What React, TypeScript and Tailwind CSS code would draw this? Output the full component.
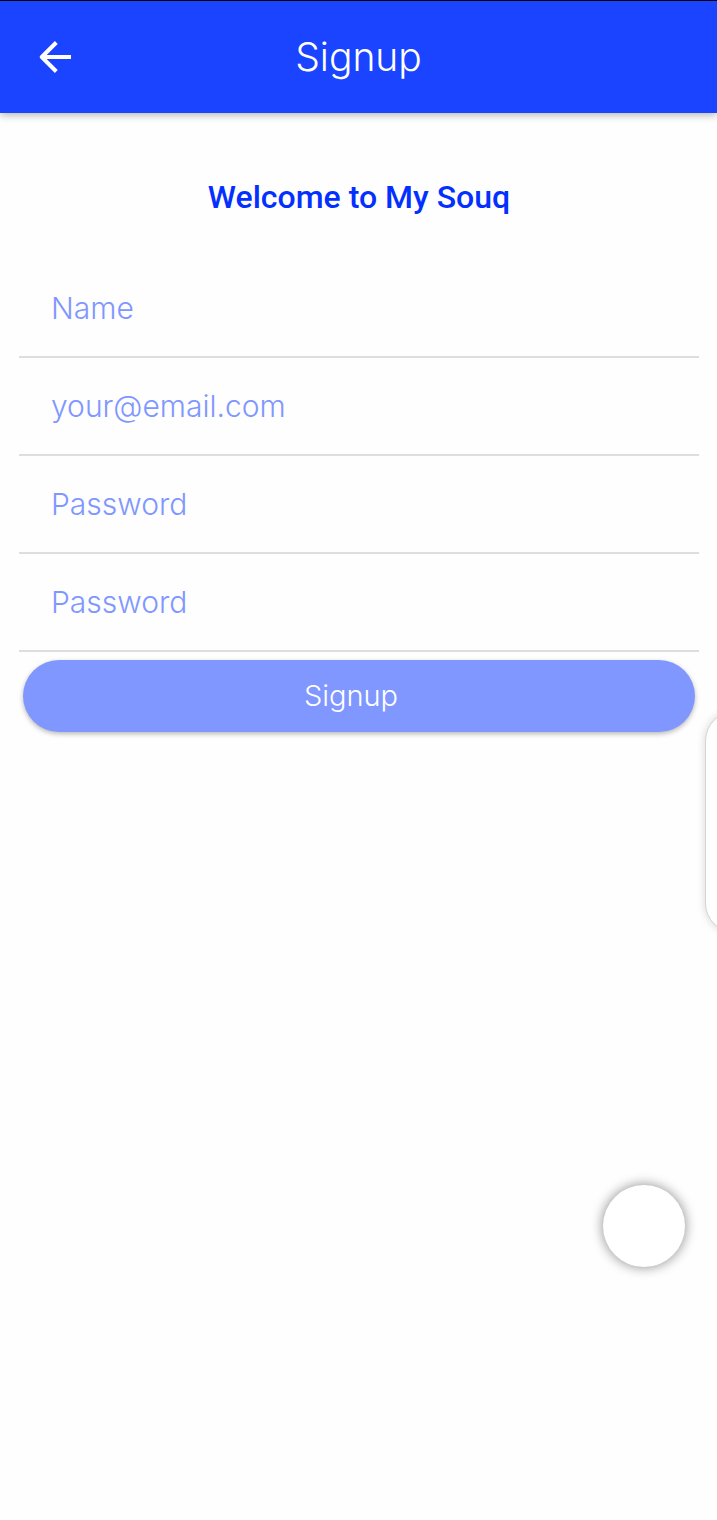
const fields = [
  { id: "name", label: "Name", placeholder: "Name", type: "text" },
  { id: "email", label: "Email", placeholder: "your@email.com", type: "email" },
  { id: "password", label: "Password", placeholder: "Password", type: "password" },
  { id: "confirm", label: "Confirm password", placeholder: "Password", type: "password" },
];

export default function App() {
  return (
    <div className="relative flex min-h-screen flex-col overflow-hidden bg-[#fefefe] font-['Inter',sans-serif] font-light">
      <header className="grid h-[113px] grid-cols-[64px_1fr_64px] items-center border-t border-black bg-[#1a44ff] px-[23px] text-white shadow-[0_2px_8px_rgba(0,0,0,0.3)]">
        <button type="button" aria-label="Back" className="flex size-16 items-center justify-center">
          <svg viewBox="0 0 32 32" className="size-8" fill="none" stroke="currentColor" strokeWidth="4" aria-hidden="true">
            <path d="M32 16H4" />
            <path d="M17.3 1.5L2.8 16l14.5 14.5" strokeLinejoin="round" />
          </svg>
        </button>
        <h1 className="text-center text-[39px] leading-[48px]">Signup</h1>
      </header>

      <main className="flex flex-col pl-[19px] pr-[18px] pt-[60px]">
        <h2 className="text-center font-['Roboto',sans-serif] text-[32px] font-medium leading-[48px] text-[#0430ff]">Welcome to My Souq</h2>
        <form className="mt-[39px] flex flex-col" onSubmit={(e) => e.preventDefault()}>
          {fields.map((f) => (
            <div key={f.id} className="flex h-[98px] border-b-2 border-[#dedede]">
              <input
                id={f.id}
                type={f.type}
                aria-label={f.label}
                placeholder={f.placeholder}
                className="w-full min-w-0 bg-transparent px-8 text-[30px] leading-[40px] text-[#0430ff] outline-none placeholder:text-[#8097ff] placeholder:opacity-100"
              />
            </div>
          ))}
          <button
            type="submit"
            className="mx-1 mt-2 h-[72px] rounded-full bg-[#8097ff] pr-4 text-[29px] leading-[40px] text-white shadow-[0_2px_5px_rgba(0,0,0,0.28)]"
          >
            Signup
          </button>
        </form>
      </main>

      <div className="absolute -right-12 top-[711px] h-[222px] w-[60px] rounded-[32px] border border-[#d4d4d4] bg-[#fefefe] shadow-[0_0_8px_rgba(0,0,0,0.16)]" />
      <button
        type="button"
        aria-label="Floating shortcut"
        className="absolute right-8 top-[1185px] size-[82px] rounded-full bg-white shadow-[0_0_12px_1px_rgba(0,0,0,0.4)]"
      />
    </div>
  );
}
